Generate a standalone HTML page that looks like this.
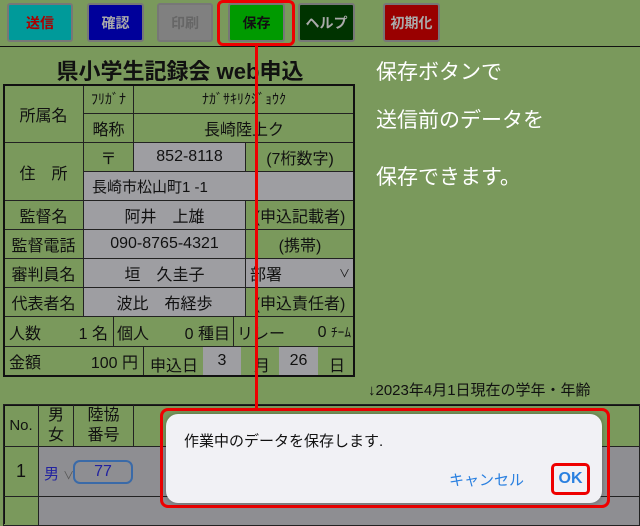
<!DOCTYPE html>
<html><head><meta charset="utf-8"><style>
*{margin:0;padding:0;box-sizing:border-box}
body{width:640px;height:520px;overflow:hidden;background:#7a995c;font-family:"Liberation Sans","Noto Sans CJK JP",sans-serif;position:relative;color:#111}
.a{position:absolute}
.btn{position:absolute;top:3px;height:39px;border:2px solid #777;border-radius:3px;font-size:14px;font-weight:bold;display:flex;align-items:center;justify-content:center}
.c{position:absolute;border:1px solid #222;display:flex;align-items:center;justify-content:center;font-size:16px}
.g{background:#9e9ea2}
.w{color:#fff;font-size:21px;position:absolute;left:376px}
</style></head><body>
<div class="btn" style="left:7px;width:66px;background:#009a9a;color:#a00">送信</div>
<div class="btn" style="left:87px;width:57px;background:#00009a;color:#aaa">確認</div>
<div class="btn" style="left:157px;width:56px;background:#808080;color:#666">印刷</div>
<div class="btn" style="left:228px;width:57px;background:#009a00;color:#111">保存</div>
<div class="btn" style="left:298px;width:57px;background:#003300;color:#aaa">ヘルプ</div>
<div class="btn" style="left:383px;width:57px;background:#990000;color:#aaa">初期化</div>
<div class="a" style="left:217px;top:0;width:78px;height:46px;border:3px solid #e00;border-radius:6px"></div>
<div class="a" style="left:0;top:46px;width:640px;height:1px;background:#111"></div>
<div class="a" style="left:0;top:54px;width:360px;text-align:center;font-size:22px;font-weight:bold">県小学生記録会 web申込</div>

<div class="c" style="left:3px;top:84px;width:81px;height:59px">所属名</div>
<div class="c" style="left:83px;top:84px;width:51px;height:30px;font-size:14px">ﾌﾘｶﾞﾅ</div>
<div class="c" style="left:133px;top:84px;width:222px;height:30px;font-size:14px">ﾅｶﾞｻｷﾘｸｼﾞｮｳｸ</div>
<div class="c" style="left:83px;top:113px;width:51px;height:30px">略称</div>
<div class="c" style="left:133px;top:113px;width:222px;height:30px">長崎陸上ク</div>
<div class="c" style="left:3px;top:142px;width:81px;height:59px">住　所</div>
<div class="c" style="left:83px;top:142px;width:51px;height:30px">〒</div>
<div class="c g" style="left:133px;top:142px;width:113px;height:30px">852-8118</div>
<div class="c" style="left:245px;top:142px;width:110px;height:30px">(7桁数字)</div>
<div class="c g" style="left:83px;top:171px;width:272px;height:30px;justify-content:flex-start;padding-left:8px;font-size:15px">長崎市松山町1 -1</div>
<div class="c" style="left:3px;top:200px;width:81px;height:30px">監督名</div>
<div class="c g" style="left:83px;top:200px;width:163px;height:30px">阿井　上雄</div>
<div class="c" style="left:245px;top:200px;width:110px;height:30px">(申込記載者)</div>
<div class="c" style="left:3px;top:229px;width:81px;height:30px">監督電話</div>
<div class="c g" style="left:83px;top:229px;width:163px;height:30px">090-8765-4321</div>
<div class="c" style="left:245px;top:229px;width:110px;height:30px">(携帯)</div>
<div class="c" style="left:3px;top:258px;width:81px;height:30px">審判員名</div>
<div class="c g" style="left:83px;top:258px;width:163px;height:30px">垣　久圭子</div>
<div class="c g" style="left:245px;top:258px;width:110px;height:30px;justify-content:space-between;padding:0 4px">部署<span style="font-size:11px">∨</span></div>
<div class="c" style="left:3px;top:287px;width:81px;height:30px">代表者名</div>
<div class="c g" style="left:83px;top:287px;width:163px;height:30px">波比　布経歩</div>
<div class="c" style="left:245px;top:287px;width:110px;height:30px">(申込責任者)</div>
<div class="c" style="left:3px;top:316px;width:111px;height:31px;justify-content:space-between;padding:0 5px">人数<span>1 名</span></div>
<div class="c" style="left:113px;top:316px;width:121px;height:31px;justify-content:space-between;padding:0 3px">個人<span>0 種目</span></div>
<div class="c" style="left:233px;top:316px;width:122px;height:31px;justify-content:space-between;padding:0 3px">リレー<span>0 <small>ﾁｰﾑ</small></span></div>
<div class="c" style="left:3px;top:346px;width:141px;height:30px;justify-content:space-between;padding:0 5px">金額<span>100 円</span></div>
<div class="c" style="left:143px;top:346px;width:212px;height:30px"></div>
<div class="a" style="left:150px;top:352px;font-size:16px">申込日</div>
<div class="a g" style="left:203px;top:347px;width:38px;height:28px;text-align:center;line-height:28px;font-size:16px">3</div>
<div class="a" style="left:254px;top:352px;font-size:16px">月</div>
<div class="a g" style="left:279px;top:347px;width:39px;height:28px;text-align:center;line-height:28px;font-size:16px">26</div>
<div class="a" style="left:329px;top:352px;font-size:16px">日</div>
<div class="a" style="left:3px;top:84px;width:352px;height:293px;border:2px solid #111"></div>

<div class="w" style="top:56px">保存ボタンで</div>
<div class="w" style="top:104px">送信前のデータを</div>
<div class="w" style="top:161px">保存できます。</div>

<div class="a" style="left:368px;top:379px;font-size:15px">↓2023年4月1日現在の学年・年齢</div>
<div class="a" style="left:3px;top:404px;width:640px;height:2px;background:#111"></div>
<div class="a" style="left:3px;top:404px;width:2px;height:120px;background:#111"></div>
<div class="c" style="left:3px;top:404px;width:36px;height:43px;font-size:15px">No.</div>
<div class="c" style="left:38px;top:404px;width:36px;height:43px;flex-direction:column;line-height:20px">男<br>女</div>
<div class="c" style="left:73px;top:404px;width:61px;height:43px;flex-direction:column;line-height:20px">陸協<br>番号</div>
<div class="c" style="left:133px;top:404px;width:507px;height:43px"></div>
<div class="c" style="left:3px;top:446px;width:36px;height:51px;font-size:18px">1</div>
<div class="c g" style="left:38px;top:446px;width:602px;height:51px;background:#8e8e92"></div>
<div class="a" style="left:44px;top:463px;color:#2222a0;font-size:15px">男 <span style="color:#555;font-size:11px">∨</span></div>
<div class="a" style="left:73px;top:460px;width:60px;height:24px;border:2px solid #3a6aa8;border-radius:7px;text-align:center;color:#2222a0;font-size:16px;line-height:20px">77</div>
<div class="c" style="left:3px;top:496px;width:36px;height:30px;font-size:18px"></div>
<div class="c" style="left:38px;top:496px;width:602px;height:30px;background:#8e8e92"></div>

<div class="a" style="left:255px;top:46px;width:3px;height:364px;background:#e00"></div>
<div class="a" style="left:160px;top:408px;width:450px;height:100px;border:3px solid #e00;border-radius:8px"></div>
<div class="a" style="left:166px;top:414px;width:436px;height:89px;background:#f1f1f5;border-radius:12px;box-shadow:0 0 6px rgba(0,0,0,.3)"></div>
<div class="a" style="left:184px;top:430px;font-size:15px">作業中のデータを保存します.</div>
<div class="a" style="left:449px;top:469px;font-size:15px;color:#2a80e0">キャンセル</div>
<div class="a" style="left:551px;top:463px;width:39px;height:32px;border:3px solid #e00;border-radius:5px;text-align:center;line-height:26px;font-size:16px;font-weight:bold;color:#2a80e0">OK</div>
</body></html>
